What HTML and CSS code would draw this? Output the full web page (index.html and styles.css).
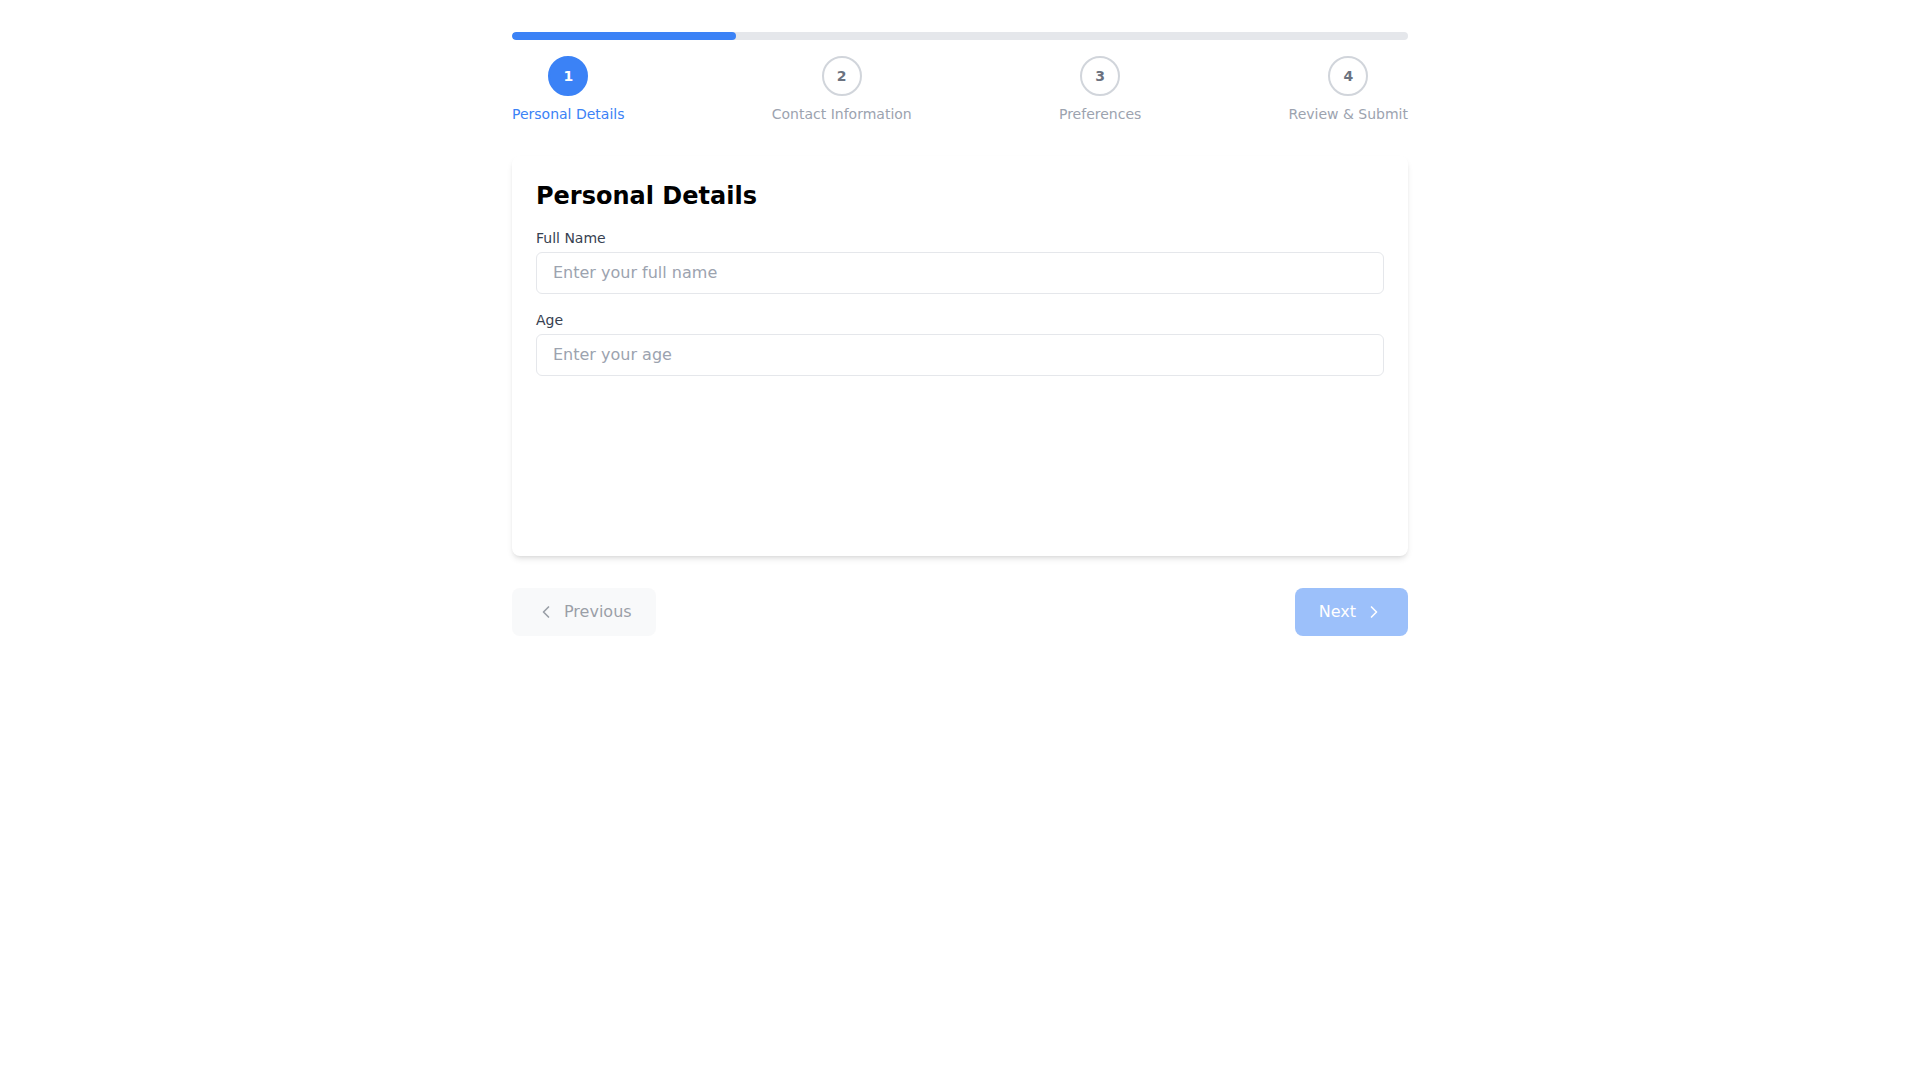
FILE: index.html
```html
<!DOCTYPE html>
<html lang="en">
<head>
<meta charset="utf-8">
<title>Multi-step Form</title>
<link rel="stylesheet" href="styles.css">
</head>
<body>
<div class="wrap">
  <div class="progress"><div class="progress-fill" style="width:25%"></div></div>
  <div class="steps">
    <div class="step active"><div class="circle">1</div><div class="step-label">Personal Details</div></div>
    <div class="step"><div class="circle">2</div><div class="step-label">Contact Information</div></div>
    <div class="step"><div class="circle">3</div><div class="step-label">Preferences</div></div>
    <div class="step"><div class="circle">4</div><div class="step-label">Review &amp; Submit</div></div>
  </div>
  <div class="card">
    <h2 class="card-title">Personal Details</h2>
    <div class="fields">
      <div class="field">
        <label class="label">Full Name</label>
        <input class="input" type="text" placeholder="Enter your full name">
      </div>
      <div class="field">
        <label class="label">Age</label>
        <input class="input" type="text" placeholder="Enter your age">
      </div>
    </div>
  </div>
  <div class="nav">
    <button class="btn btn-prev" disabled>
      <svg class="icon" viewBox="0 0 24 24" fill="none" stroke="currentColor" stroke-width="2" stroke-linecap="round" stroke-linejoin="round"><path d="m15 18-6-6 6-6"/></svg>
      <span>Previous</span>
    </button>
    <button class="btn btn-next" disabled>
      <span>Next</span>
      <svg class="icon" viewBox="0 0 24 24" fill="none" stroke="currentColor" stroke-width="2" stroke-linecap="round" stroke-linejoin="round"><path d="m9 18 6-6-6-6"/></svg>
    </button>
  </div>
</div>
</body>
</html>
```

FILE: styles.css
```css
* { box-sizing: border-box; }
html, body { margin: 0; padding: 0; background: #ffffff; }
body { font-family: "DejaVu Sans", sans-serif; color: #111827; }
.wrap { width: 896px; margin: 0 auto; padding-top: 32px; }
.progress { height: 8px; background: #e5e7eb; border-radius: 9999px; overflow: hidden; margin-bottom: 16px; }
.progress-fill { height: 100%; background: #3b82f6; border-radius: 9999px; }
.steps { display: flex; justify-content: space-between; margin-bottom: 32px; }
.step { display: flex; flex-direction: column; align-items: center; }
.circle { width: 40px; height: 40px; border-radius: 50%; border: 2px solid #d1d5db; color: #6b7280; font-size: 14px; font-weight: 700; display: flex; align-items: center; justify-content: center; background: #fff; }
.step-label { margin-top: 8px; font-size: 14px; line-height: 20px; color: #9ca3af; }
.step.active .circle { background: #3b82f6; border-color: #3b82f6; color: #ffffff; }
.step.active .step-label { color: #3b82f6; }
.card { background: #fff; border-radius: 8px; box-shadow: 0 4px 6px -1px rgba(0,0,0,0.1), 0 2px 4px -2px rgba(0,0,0,0.1); padding: 24px; min-height: 400px; }
.card-title { margin: 0 0 16px; font-size: 24px; line-height: 32px; font-weight: 700; color: #000; }
.fields { display: flex; flex-direction: column; gap: 16px; }
.field { display: flex; flex-direction: column; }
.label { font-size: 14px; line-height: 20px; color: #374151; margin-bottom: 4px; }
.input { font-family: inherit; font-size: 16px; line-height: 24px; padding: 8px 16px; border: 1px solid #e5e7eb; border-radius: 6px; color: #111827; outline: none; width: 100%; }
.input::placeholder { color: #9ca3af; }
.nav { display: flex; justify-content: space-between; margin-top: 32px; }
.btn { font-family: inherit; font-size: 16px; line-height: 24px; padding: 12px 24px; border: none; border-radius: 8px; display: flex; align-items: center; gap: 8px; opacity: 0.5; cursor: not-allowed; }
.icon { width: 20px; height: 20px; }
.btn-prev { background: #f3f4f6; color: #374151; }
.btn-next { background: #3b82f6; color: #ffffff; }
```
